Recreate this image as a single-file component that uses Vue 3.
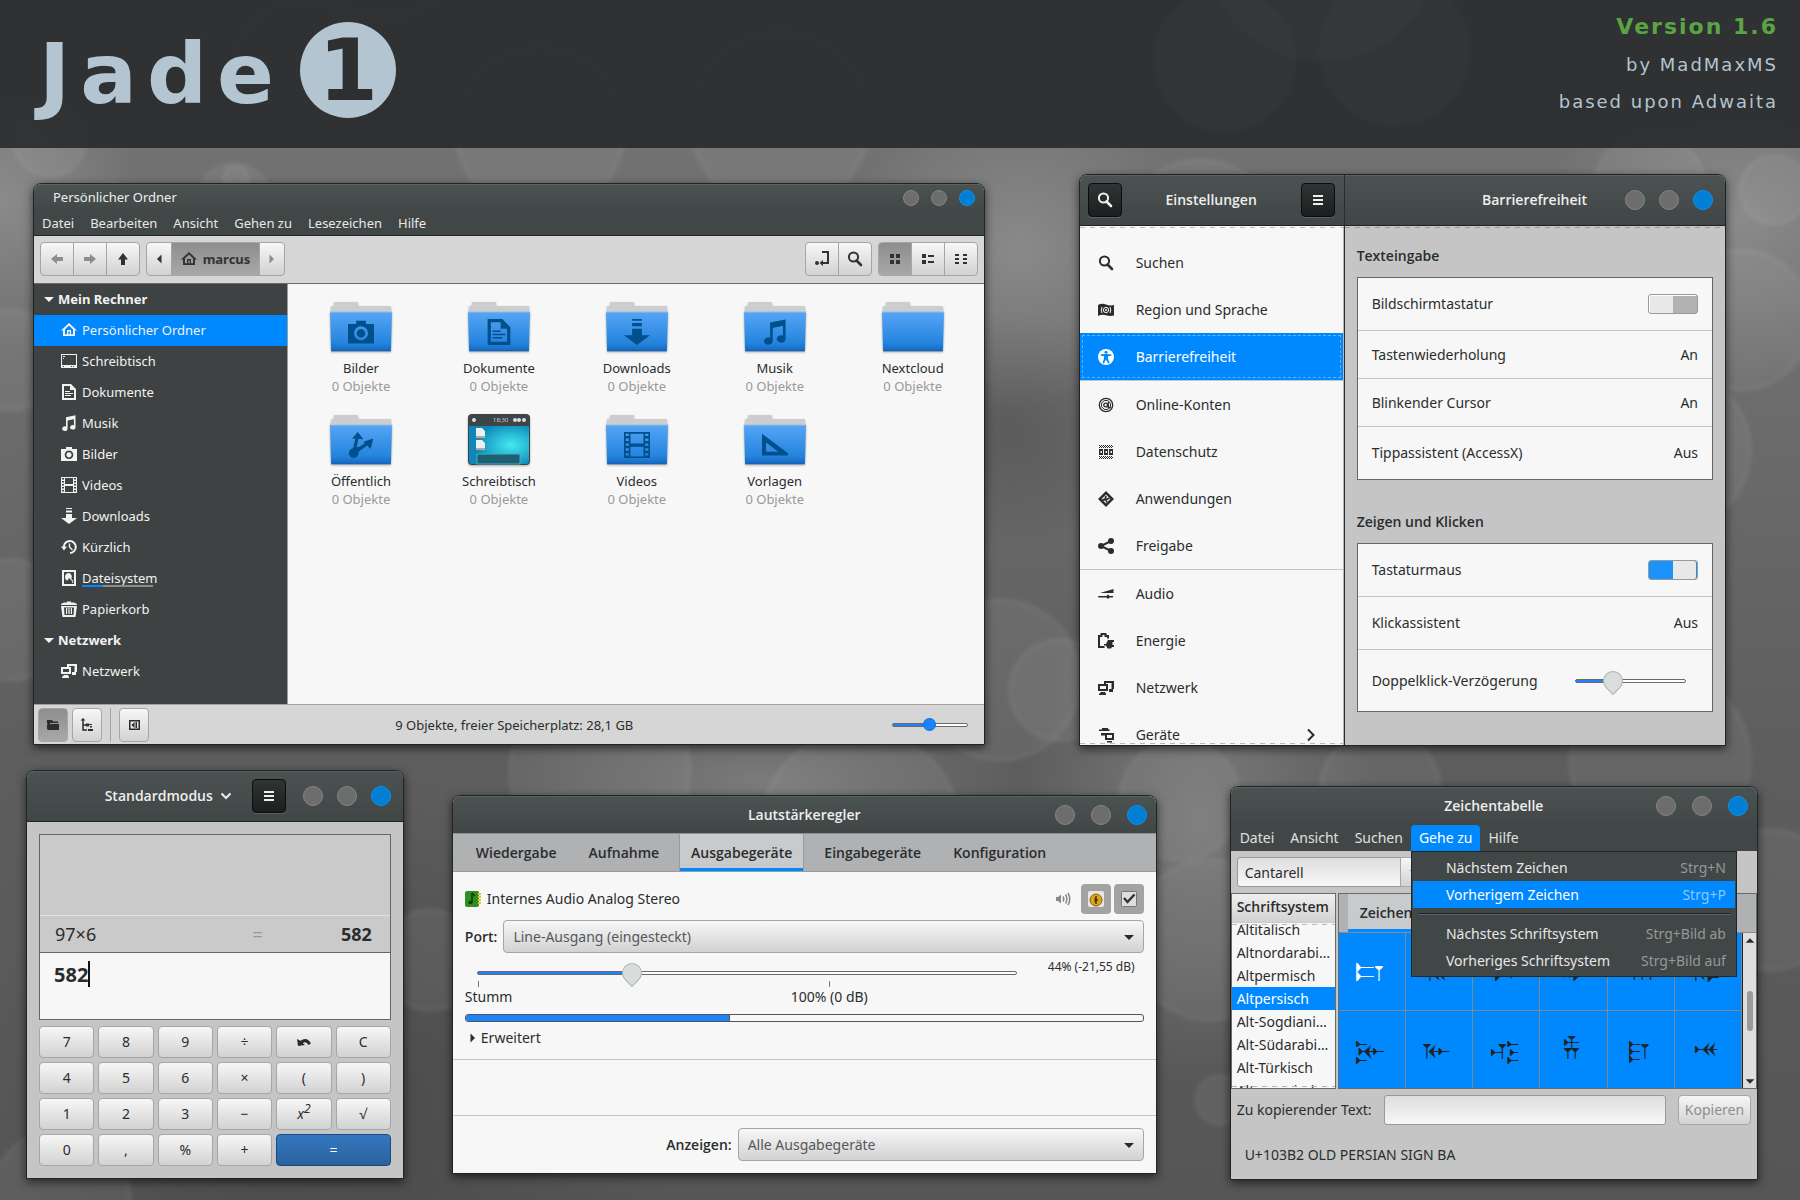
<script setup>
import { ref } from 'vue'

const controls = ['min', 'max', 'close']
const fileMenu = ['Datei', 'Bearbeiten', 'Ansicht', 'Gehen zu', 'Lesezeichen', 'Hilfe']
const places = [
  { id: 'home', label: 'Persönlicher Ordner' },
  { id: 'desktop', label: 'Schreibtisch' },
  { id: 'doc', label: 'Dokumente' },
  { id: 'music', label: 'Musik' },
  { id: 'camera', label: 'Bilder' },
  { id: 'film', label: 'Videos' },
  { id: 'download', label: 'Downloads' },
  { id: 'recent', label: 'Kürzlich' },
  { id: 'disk', label: 'Dateisystem', usage: 30 },
  { id: 'trash', label: 'Papierkorb' },
]
const folders = [
  { name: 'Bilder', glyph: 'camera' },
  { name: 'Dokumente', glyph: 'doc' },
  { name: 'Downloads', glyph: 'download' },
  { name: 'Musik', glyph: 'music' },
  { name: 'Nextcloud', glyph: '' },
  { name: 'Öffentlich', glyph: 'public' },
  { name: 'Schreibtisch', glyph: 'screen' },
  { name: 'Videos', glyph: 'film' },
  { name: 'Vorlagen', glyph: 'template' },
]
const settings = [
  { id: 'search', label: 'Suchen' },
  { id: 'flag', label: 'Region und Sprache' },
  { id: 'access', label: 'Barrierefreiheit', active: true },
  { id: 'at', label: 'Online-Konten' },
  { id: 'privacy', label: 'Datenschutz' },
  { id: 'apps', label: 'Anwendungen' },
  { id: 'share', label: 'Freigabe', line: true },
  { id: 'audio', label: 'Audio' },
  { id: 'power', label: 'Energie' },
  { id: 'network', label: 'Netzwerk' },
  { id: 'devices', label: 'Geräte', more: true },
]
const keys = ['7', '8', '9', '÷', 'undo', 'C', '4', '5', '6', '×', '(', ')', '1', '2', '3', '−', 'x2', '√', '0', ',', '%', '+', '=']
const tabs = ['Wiedergabe', 'Aufnahme', 'Ausgabegeräte', 'Eingabegeräte', 'Konfiguration']
const scripts = ['Altitalisch', 'Altnordarabi…', 'Altpermisch', 'Altpersisch', 'Alt-Sogdiani…', 'Alt-Südarabi…', 'Alt-Türkisch', 'Altungarisch']
const chars = Array.from({ length: 12 }, (_, i) => String.fromCodePoint(0x103b2 + i))

const zoom = ref(50)
const delay = ref(30)
const volume = ref(44)
const level = 39
const screenKeyboard = ref(false)
const mouseKeys = ref(true)
</script>

<template>
  <svg class="symbols" aria-hidden="true">
    <symbol id="home" viewBox="0 0 16 16"><path d="M8 1 0 8.5h2V14h12V8.5h2zM8 3.6l4 3.8v4.8H4V7.4z" fill-rule="evenodd" /><path d="M6 13V8h4v5H8.7V9.5H7.3V13z" /></symbol>
    <symbol id="desktop" viewBox="0 0 16 16"><path d="M0 1h16v14H0zm1 1v10h14V2zm11 11v1h1v-1zm-2 0v1h1v-1zM2 13v1h1v-1z" fill-rule="evenodd" /><path d="M2 3h2v1H2zM2 5h1v1H2z" /></symbol>
    <symbol id="doc" viewBox="0 0 16 16"><path d="M1 0h9l5 5v11H1zm2 2v12h10V6H9V2z" fill-rule="evenodd" /><path d="M4 7h5v1H4zM4 9h8v1H4zM4 11h6v1H4z" /></symbol>
    <symbol id="music" viewBox="0 0 16 16"><path d="M5 2.2 14.5.3V12.200a2.700 2.300 0 1 1-1.600-2V4.200L6.600 5.500v8a2.700 2.300 0 1 1-1.600-2z" /></symbol>
    <symbol id="camera" viewBox="0 0 16 16"><path d="M5 1h6v2h5v12H0V3h5zm3 3.500a4.300 4.300 0 1 0 .01 0zm0 1.700a2.600 2.600 0 1 1-.01 0z" fill-rule="evenodd" /></symbol>
    <symbol id="film" viewBox="0 0 16 16"><path d="M0 0h16v16H0zm4 1v6h8V1zm0 8v6h8V9zM1 1v1.500h2V1zm0 3v1.500h2V4zm0 3v1.500h2V7zm0 3v1.500h2V10zm0 3v1.500h2V13zM13 1v1.500h2V1zm0 3v1.500h2V4zm0 3v1.500h2V7zm0 3v1.500h2V10zm0 3v1.500h2V13z" fill-rule="evenodd" /></symbol>
    <symbol id="download" viewBox="0 0 16 16"><path d="M5 0h6v1H5zM5 2.500h6v2H5zM5 6h6v4h5l-8 6-8-6h5z" /></symbol>
    <symbol id="recent" viewBox="0 0 16 16"><path d="M2.800 8A6 6 0 1 1 9 14" fill="none" stroke="currentColor" stroke-width="2" /><path d="M0 7.500h6L3 11.500z" /><path d="M8.500 4.500V8l3 3" fill="none" stroke="currentColor" stroke-width="1.400" /></symbol>
    <symbol id="disk" viewBox="0 0 16 16"><path d="M1 0h14v16H1zm2 2v12h10V2z" fill-rule="evenodd" /><path d="M8 3a4 4 0 0 0-1.500 7.700L8 8l4 4 .5-1-2.200-2.200A4 4 0 0 0 8 3z" /><path d="M11 12h1v1h-1z" /></symbol>
    <symbol id="trash" viewBox="0 0 16 16"><path d="M3 1.500h3V.5h4v1h3l3 1.500v1H0V3zM0 5h16l-1.500 11h-13zm3 1.500L3.500 14h9l.5-7.500z" fill-rule="evenodd" /><path d="M5 7h1.200v6H5zM7.400 7h1.200v6H7.400zM9.800 7H11v6H9.800z" /></symbol>
    <symbol id="network" viewBox="0 0 16 16"><path d="M6 1h10v8h-1v3h-4V9h2.500V3H8v1H6zM0 4h10v7H0zm2 2v3h6V6zM3 12h4l1 2v1H1v-1z" fill-rule="evenodd" /></symbol>
    <symbol id="search" viewBox="0 0 16 16"><circle cx="6.500" cy="6" r="4.600" fill="none" stroke="currentColor" stroke-width="2" /><path d="M9.500 9.500 14 14" stroke="currentColor" stroke-width="2.600" stroke-linecap="round" /></symbol>
    <symbol id="flag" viewBox="0 0 16 16"><path d="M0 3q4-2 8-.5T16 3v10.500q-4 1-8-.2T0 14z" /><circle cx="8" cy="8" r="2.600" fill="none" stroke="#f7f7f7" /><circle cx="8" cy="8" r="1" fill="#f7f7f7" /><path d="M4 5q-1.500 3 0 6M12 5q1.500 3 0 6" fill="none" stroke="#f7f7f7" /></symbol>
    <symbol id="access" viewBox="0 0 16 16"><circle cx="8" cy="8" r="8" /><circle cx="8" cy="3.300" r="1.500" fill="#0088ff" /><path d="M2.500 5.500 7 5h2l4.500.5-.2 1.200-3.300.5v2.300l1.500 4.500-1.300.4L8 10.500l-2.200 3.900-1.300-.4L6 9.500V7.200l-3.300-.5z" fill="#0088ff" /></symbol>
    <symbol id="at" viewBox="0 0 16 16"><circle cx="8" cy="8" r="6.700" fill="none" stroke="currentColor" stroke-width="1.300" /><circle cx="8" cy="8" r="4.600" fill="none" stroke="currentColor" /><circle cx="7.700" cy="8" r="1.900" fill="none" stroke="currentColor" stroke-width="1.400" /><path d="M10.300 5v5.500h2.500" fill="none" stroke="currentColor" stroke-width="1.300" /></symbol>
    <symbol id="privacy" viewBox="0 0 16 16"><path d="M1 1.500h14M1 3.500h14M1 12.500h14M1 14.500h14" stroke="currentColor" stroke-dasharray="1 1" /><path d="M2 2.500h13M2 13.500h13" stroke="currentColor" stroke-dasharray="1 1" /><path d="M1 5h4v6H1zm1.500 2v2H4V7zM6 5h4v6H6zm1.500 2v2H9V7zM11 5h4v6h-4zm1.500 2v2H14V7z" fill-rule="evenodd" /></symbol>
    <symbol id="apps" viewBox="0 0 16 16"><path d="m8 0 8 8-8 8-8-8zm0 3.500L3.500 8 8 12.500 12.500 8z" fill-rule="evenodd" /><path d="m7 4.500 2 1-1.200 2 3-1L12 8l-3 1 .5 2L8 12l-.5-2.500L5 10 4 8l2.500-.5z" /></symbol>
    <symbol id="share" viewBox="0 0 16 16"><circle cx="3" cy="8" r="3" /><circle cx="13" cy="3" r="3" /><circle cx="13" cy="13" r="3" /><path d="M13 3 3 8l10 5" fill="none" stroke="currentColor" stroke-width="2" /></symbol>
    <symbol id="audio" viewBox="0 0 16 16"><path d="M2 7 15.500 3v4zM0 10h8.500l1.500-1.500L11.500 10H15v1.500h-3.500L10 13l-1.500-1.500H.5z" /></symbol>
    <symbol id="power" viewBox="0 0 16 16"><path d="M6.500 14H1V3h2.500V1h4v2H10v2.500" fill="none" stroke="currentColor" stroke-width="2" /><path d="M16 7v2h-1.500v3H16v2h-2l-1 1.500H9.500L8 12.500H6V11h2l2-4z" /></symbol>
    <symbol id="devices" viewBox="0 0 16 16"><path d="M4 1h6v1.200h1.500V4H1V2.500h3zM3 6h4v2.500H3z" /><path d="M7 6h9v7H7zm2 2v3h5V8zM9 14h5v1.500H9z" fill-rule="evenodd" /></symbol>
    <symbol id="public" viewBox="0 0 16 16"><circle cx="3.500" cy="13" r="3" /><path d="M3.500 13 5.500 4M3.500 13l9-6.500" stroke="currentColor" stroke-width="2" fill="none" /><path d="m6 0 3.500 4.500-7-.5zM15.500 4 14 10.500 9.500 6z" /><path d="m4.500 9.500 6-1-5 4z" /></symbol>
    <symbol id="template" viewBox="0 0 16 16"><path d="M0 1v13.500h18zm2.500 5.500 7.500 5.700H2.500z" fill-rule="evenodd" /></symbol>
    <symbol id="left" viewBox="0 0 16 16"><path d="M2 8l6-5v3h6v4H8v3z" /></symbol>
    <symbol id="right" viewBox="0 0 16 16"><path d="M14 8 8 3v3H2v4h6v3z" /></symbol>
    <symbol id="up" viewBox="0 0 16 16"><path d="M8 2l5 6.500h-3V14H6V8.500H3z" /></symbol>
    <symbol id="tri-left" viewBox="0 0 16 16"><path d="M10.500 3.500v9L6 8z" /></symbol>
    <symbol id="tri-right" viewBox="0 0 16 16"><path d="M5.500 3.500v9L10 8z" /></symbol>
    <symbol id="tri-down" viewBox="0 0 16 16"><path d="M3 6h10l-5 5z" /></symbol>
    <symbol id="tri-up" viewBox="0 0 16 16"><path d="M3 11h10L8 6z" /></symbol>
    <symbol id="locate" viewBox="0 0 16 16"><circle cx="3" cy="12" r="2" /><path d="M8 1h6v11H8" fill="none" stroke="currentColor" stroke-width="2" /><path d="M9 9v6l-3.500-3z" /></symbol>
    <symbol id="icons" viewBox="0 0 16 16"><path d="M3 3h4v4H3zM9 3h4v4H9zM3 9h4v4H3zM9 9h4v4H9z" /></symbol>
    <symbol id="list" viewBox="0 0 16 16"><path d="M2 3h4v4H2zM2 9h4v4H2zM8 4h6v2H8zM8 10h6v2H8z" /></symbol>
    <symbol id="compact" viewBox="0 0 16 16"><path d="M2 3h4v2H2zM2 7h4v2H2zM2 11h4v2H2zM10 3h4v2h-4zM10 7h4v2h-4zM10 11h4v2h-4z" /></symbol>
    <symbol id="folder" viewBox="0 0 16 16"><path d="M2 3h5l1 1.500h5V6H5v5H3V6H2zM5.500 7H14v6H3l-1-1V5l2 6z" /></symbol>
    <symbol id="tree" viewBox="0 0 16 16"><path d="M4 2v11h4M4 8h4" stroke="currentColor" stroke-width="1.500" fill="none" /><path d="M1.500 3.500h5L4 1zM7 6.500h3v3H7zM10 7h3v1h-3zM9 12h5v2H9zM11 9h2v1.500h-2z" /></symbol>
    <symbol id="panel" viewBox="0 0 16 16"><path d="M3 3h11v10H3zm1.500 1.500v7h8v-7z" fill-rule="evenodd" /><path d="M8.500 5v6L5.500 8zM9.500 5H11v6H9.500z" /></symbol>
    <symbol id="menu" viewBox="0 0 16 16"><path d="M3 3h10v2H3zM3 7h10v2H3zM3 11h10v2H3z" /></symbol>
    <symbol id="undo" viewBox="0 0 16 16"><path d="M1 5l1 7 7-1-2.200-1.800Q10 6.500 12.500 11L15 9.500Q11 2 4.500 6.800z" /></symbol>
    <symbol id="chev-down" viewBox="0 0 16 16"><path d="m3.500 5.500 4.500 4.500 4.500-4.500" fill="none" stroke="currentColor" stroke-width="2" /></symbol>
    <symbol id="chev-right" viewBox="0 0 16 16"><path d="m5 2.500 5.500 5.500L5 13.500" fill="none" stroke="currentColor" stroke-width="2" /></symbol>
    <symbol id="speaker" viewBox="0 0 16 16"><path d="M1 6h2l3-2.500v9L3 10H1z" /><path d="M8 5.500q1.500 2.500 0 5M10.500 3.500q2.800 4.500 0 9M13 2q3.500 6 0 12" fill="none" stroke="currentColor" stroke-width="1.500" /></symbol>
    <linearGradient id="g-front" x1="0" y1="0" x2="0" y2="1">
      <stop offset="0" stop-color="#57a5f4" /><stop offset=".8" stop-color="#2484de" /><stop offset="1" stop-color="#1668be" />
    </linearGradient>
    <radialGradient id="g-screen" cx=".7" cy=".5" r=".6">
      <stop offset="0" stop-color="#42eaf0" /><stop offset="1" stop-color="#0f86b8" />
    </radialGradient>
    <radialGradient id="g-glow"><stop offset="0" stop-color="#fff" stop-opacity=".18" /><stop offset="1" stop-color="#fff" stop-opacity="0" /></radialGradient>
    <radialGradient id="g-dark"><stop offset="0" stop-color="#000" stop-opacity=".15" /><stop offset="1" stop-color="#000" stop-opacity="0" /></radialGradient>
    <linearGradient id="g-desk" x1="0" y1="0" x2="0" y2="1">
      <stop offset="0" stop-color="#747474" /><stop offset=".3" stop-color="#6e6e6e" /><stop offset=".62" stop-color="#5e5e5e" /><stop offset="1" stop-color="#565656" />
    </linearGradient>
    <filter id="soft"><feGaussianBlur stdDeviation="2" /></filter>
  </svg>

  <div class="page">
    <svg class="wallpaper" viewBox="0 0 1800 1200" preserveAspectRatio="xMidYMid slice" aria-hidden="true">
      <rect width="1800" height="1200" fill="url(#g-desk)" />
      <ellipse cx="1020" cy="250" rx="180" ry="160" fill="url(#g-glow)" />
      <ellipse cx="1740" cy="220" rx="200" ry="160" fill="url(#g-glow)" />
      <ellipse cx="0" cy="200" rx="140" ry="160" fill="url(#g-glow)" />
      <ellipse cx="1010" cy="430" rx="140" ry="120" fill="url(#g-dark)" />
      <ellipse cx="1200" cy="820" rx="180" ry="260" fill="url(#g-glow)" />
      <ellipse cx="760" cy="780" rx="260" ry="80" fill="url(#g-glow)" />
      <ellipse cx="330" cy="1100" rx="360" ry="340" fill="url(#g-dark)" />
      <g fill="#fff" fill-opacity=".05" stroke="#fff" stroke-opacity=".07" stroke-width="3" filter="url(#soft)">
        <circle cx="540" cy="130" r="84" /><circle cx="385" cy="-60" r="80" /><circle cx="300" cy="70" r="70" />
        <circle cx="780" cy="120" r="90" /><circle cx="1200" cy="240" r="80" /><circle cx="1650" cy="190" r="56" />
        <circle cx="1774" cy="190" r="34" /><circle cx="1670" cy="450" r="80" /><circle cx="1740" cy="320" r="70" />
        <circle cx="10" cy="360" r="50" /><circle cx="50" cy="140" r="36" /><circle cx="236" cy="178" r="12" />
        <circle cx="112" cy="194" r="10" /><circle cx="234" cy="200" r="36" /><circle cx="10" cy="620" r="60" />
        <circle cx="1000" cy="680" r="80" /><circle cx="1060" cy="690" r="50" /><circle cx="1180" cy="800" r="60" />
        <circle cx="1210" cy="940" r="80" /><circle cx="600" cy="770" r="90" /><circle cx="860" cy="830" r="100" />
        <circle cx="1220" cy="1100" r="24" /><circle cx="430" cy="960" r="50" /><circle cx="1380" cy="790" r="60" />
        <circle cx="1660" cy="760" r="90" /><circle cx="1770" cy="900" r="70" /><circle cx="60" cy="1200" r="70" />
      </g>
      <g fill="#fff" fill-opacity=".22" stroke="#fff" stroke-opacity=".2" stroke-width="3" filter="url(#soft)">
        <circle cx="1322" cy="-55" r="115" /><circle cx="1395" cy="50" r="74" /><circle cx="1225" cy="60" r="70" />
      </g>
    </svg>

    <header class="banner">
      <h1 class="logo">Jade<span class="logo-one">1</span></h1>
      <div class="credits">
        <p class="version">Version 1.6</p>
        <p>by MadMaxMS</p>
        <p>based upon Adwaita</p>
      </div>
    </header>

    <main class="desk">
      <div class="row row-top">
        <section class="win files">
          <div class="bar files-title">
            <span>Persönlicher Ordner</span>
            <div class="controls small"><button v-for="c in controls" :key="c" :class="c" :aria-label="c"></button></div>
          </div>
          <nav class="files-menu"><button v-for="m in fileMenu" :key="m">{{ m }}</button></nav>
          <div class="files-tools">
            <div class="group">
              <button disabled aria-label="Zurück"><svg class="ic"><use href="#left" /></svg></button>
              <button disabled aria-label="Vor"><svg class="ic"><use href="#right" /></svg></button>
              <button aria-label="Aufwärts"><svg class="ic"><use href="#up" /></svg></button>
            </div>
            <div class="group path">
              <button class="narrow" aria-label="Nach links"><svg class="ic"><use href="#tri-left" /></svg></button>
              <button class="on crumb"><svg class="ic"><use href="#home" /></svg>marcus</button>
              <button class="narrow" disabled aria-label="Nach rechts"><svg class="ic"><use href="#tri-right" /></svg></button>
            </div>
            <div class="group push">
              <button aria-label="Ort"><svg class="ic"><use href="#locate" /></svg></button>
              <button aria-label="Suche"><svg class="ic"><use href="#search" /></svg></button>
            </div>
            <div class="group">
              <button class="on" aria-label="Symbole"><svg class="ic"><use href="#icons" /></svg></button>
              <button aria-label="Liste"><svg class="ic"><use href="#list" /></svg></button>
              <button aria-label="Kompakt"><svg class="ic"><use href="#compact" /></svg></button>
            </div>
          </div>
          <div class="files-body">
            <aside class="side">
              <h2><svg class="ic"><use href="#tri-down" /></svg>Mein Rechner</h2>
              <a v-for="(p, i) in places" :key="p.id" href="#" :class="{ current: i === 0 }">
                <svg class="ic"><use :href="'#' + p.id" /></svg>
                <span class="place">{{ p.label }}<span v-if="p.usage" class="usage"><span :style="{ width: p.usage + '%' }"></span></span></span>
              </a>
              <h2><svg class="ic"><use href="#tri-down" /></svg>Netzwerk</h2>
              <a href="#"><svg class="ic"><use href="#network" /></svg><span>Netzwerk</span></a>
            </aside>
            <div class="folders">
              <div v-for="f in folders" :key="f.name" class="folder">
                <svg v-if="f.glyph !== 'screen'" class="folder-pic" viewBox="0 0 62 50">
                  <path d="M1 12V5q0-1 1-1h2V1q0-1 1-1h22q1 0 1 1v3h32q1 0 1 1v7z" fill="#cdcdcd" />
                  <path d="M0 10h62l-1 38q0 1-1 1H2q-1 0-1-1z" fill="url(#g-front)" />
                  <path d="M0 10h62" stroke="#8cc0f5" /><path d="M1 49h60" stroke="#0f55a0" stroke-opacity=".6" />
                  <svg v-if="f.glyph" x="18" y="17" width="26" height="26" class="folder-glyph" overflow="visible"><use :href="'#' + f.glyph" /></svg>
                </svg>
                <svg v-else class="folder-pic" viewBox="0 0 62 50">
                  <rect x="0" y="-1" width="62" height="51" rx="4" fill="#3c4648" />
                  <path d="M1 11h60v35q0 3-3 3H4q-3 0-3-3z" fill="url(#g-screen)" />
                  <circle cx="6" cy="5" r="2" fill="#ddd" /><circle cx="47" cy="5" r="2" fill="#ddd" /><circle cx="51" cy="5" r="2" fill="#ddd" /><circle cx="56" cy="5" r="2" fill="#ddd" />
                  <text x="25" y="7" font-size="6" fill="#ccc">18:30</text>
                  <path d="M8 13h6l3 3v6H8zM8 25h6l3 3v6H8z" fill="#eee" /><path d="M8 21h9v2H8zM8 33h9v2H8z" fill="#aaa" />
                  <rect x="9" y="39" width="43" height="10" fill="#1e5f72" stroke="#3fb6c8" />
                </svg>
                <span class="folder-name">{{ f.name }}</span>
                <span class="folder-count">0 Objekte</span>
              </div>
            </div>
          </div>
          <footer class="files-status">
            <button class="btn on" aria-label="Orte"><svg class="ic"><use href="#folder" /></svg></button>
            <button class="btn" aria-label="Baum"><svg class="ic"><use href="#tree" /></svg></button>
            <span class="vline"></span>
            <button class="btn" aria-label="Seitenleiste"><svg class="ic"><use href="#panel" /></svg></button>
            <span class="status-text">9 Objekte, freier Speicherplatz: 28,1 GB</span>
            <input v-model="zoom" class="range round" type="range" aria-label="Vergrößerung" :style="{ '--v': zoom + '%' }" />
          </footer>
        </section>

        <section class="win settings">
          <div class="set-left">
            <div class="bar set-head">
              <button class="dark" aria-label="Suchen"><svg class="ic"><use href="#search" /></svg></button>
              <strong>Einstellungen</strong>
              <button class="dark" aria-label="Menü"><svg class="ic"><use href="#menu" /></svg></button>
            </div>
            <nav class="set-list">
              <a v-for="s in settings" :key="s.id" href="#" :class="{ active: s.active, line: s.line }">
                <svg class="ic"><use :href="'#' + s.id" /></svg><span>{{ s.label }}</span>
                <svg v-if="s.more" class="ic more"><use href="#chev-right" /></svg>
              </a>
            </nav>
          </div>
          <div class="set-right">
            <div class="bar set-head right">
              <strong>Barrierefreiheit</strong>
              <div class="controls"><button v-for="c in controls" :key="c" :class="c" :aria-label="c"></button></div>
            </div>
            <div class="set-page">
              <h2>Texteingabe</h2>
              <div class="card">
                <label class="card-row tall"><span>Bildschirmtastatur</span><input v-model="screenKeyboard" type="checkbox" class="switch" /></label>
                <div class="card-row"><span>Tastenwiederholung</span><span>An</span></div>
                <div class="card-row"><span>Blinkender Cursor</span><span>An</span></div>
                <div class="card-row tall"><span>Tippassistent (AccessX)</span><span>Aus</span></div>
              </div>
              <h2>Zeigen und Klicken</h2>
              <div class="card">
                <label class="card-row tall"><span>Tastaturmaus</span><input v-model="mouseKeys" type="checkbox" class="switch" /></label>
                <div class="card-row tall"><span>Klickassistent</span><span>Aus</span></div>
                <label class="card-row slider"><span>Doppelklick-Verzögerung</span><input v-model="delay" class="range" type="range" :style="{ '--v': delay + '%' }" /></label>
              </div>
            </div>
          </div>
        </section>
      </div>

      <div class="row row-bottom">
        <section class="win calc">
          <div class="bar calc-head">
            <button class="mode">Standardmodus<svg class="ic"><use href="#chev-down" /></svg></button>
            <button class="dark" aria-label="Menü"><svg class="ic"><use href="#menu" /></svg></button>
            <div class="controls"><button v-for="c in controls" :key="c" :class="c" :aria-label="c"></button></div>
          </div>
          <div class="calc-body">
            <div class="display">
              <div class="history"><div class="calc-line"><span>97×6</span><span class="eq">=</span><b>582</b></div></div>
              <div class="entry"><b>582</b><span class="caret"></span></div>
            </div>
            <div class="keys">
              <button v-for="k in keys" :key="k" class="btn key" :class="{ equals: k === '=' }" :aria-label="k">
                <svg v-if="k === 'undo'" class="ic"><use href="#undo" /></svg>
                <i v-else-if="k === 'x2'">x<sup>2</sup></i>
                <template v-else>{{ k }}</template>
              </button>
            </div>
          </div>
        </section>

        <section class="win mixer">
          <div class="bar mixer-head">
            <strong>Lautstärkeregler</strong>
            <div class="controls wide"><button v-for="c in controls" :key="c" :class="c" :aria-label="c"></button></div>
          </div>
          <nav class="tabs"><button v-for="(t, i) in tabs" :key="t" :class="{ active: i === 2 }">{{ t }}</button></nav>
          <div class="device">
            <div class="device-head">
              <svg class="ic card-icon" viewBox="0 0 16 16"><rect x="0" y="0" width="14" height="16" rx="2" fill="#2f8f1f" /><path d="M13 2h3v2h-3zM13 5h3v2h-3zM13 8h3v2h-3zM13 11h3v2h-3z" fill="#e0c530" /><path d="M7 2v9M7 2l3 3" stroke="#123c0c" stroke-width="1.500" fill="none" /><ellipse cx="5.500" cy="11.500" rx="2.200" ry="1.800" fill="#123c0c" /></svg>
              <span>Internes Audio Analog Stereo</span>
              <svg class="ic mute"><use href="#speaker" /></svg>
              <button class="sq" aria-label="Kanäle sperren"><svg class="ic" viewBox="0 0 16 16"><rect width="16" height="16" rx="2" fill="#e6e6e2" /><circle cx="8" cy="9" r="6" fill="#dba51c" stroke="#8a6508" /><path d="M8 5v8M6.500 7.500 9 9l-2.500 1.500" stroke="#4a3500" stroke-width="1.500" fill="none" /></svg></button>
              <button class="sq" aria-label="Als Ausweichoption setzen"><svg class="ic" viewBox="0 0 16 16"><rect x=".5" y=".5" width="15" height="15" rx="1" fill="#dedede" stroke="#777" /><path d="m3 7 3.500 4L13.500 3.500" stroke="#333" stroke-width="2.500" fill="none" /></svg></button>
            </div>
            <div class="port">
              <label for="port">Port:</label>
              <div class="combo"><select id="port"><option>Line-Ausgang (eingesteckt)</option></select><svg class="ic"><use href="#tri-down" /></svg></div>
            </div>
            <div class="volume">
              <div class="volume-scale">
                <input v-model="volume" class="range" type="range" min="0" max="158" aria-label="Lautstärke" :style="{ '--v': (volume / 158) * 100 + '%' }" />
                <div class="marks"><span>Stumm</span><span class="full">100% (0 dB)</span></div>
              </div>
              <span class="db">44% (-21,55 dB)</span>
            </div>
            <div class="meter"><span :style="{ width: level + '%' }"></span></div>
            <button class="expand"><svg class="ic"><use href="#tri-right" /></svg>Erweitert</button>
          </div>
          <div class="blank"></div>
          <div class="show">
            <label for="show">Anzeigen:</label>
            <div class="combo"><select id="show"><option>Alle Ausgabegeräte</option></select><svg class="ic"><use href="#tri-down" /></svg></div>
          </div>
        </section>

        <section class="win charmap">
          <div class="bar char-head">
            <strong>Zeichentabelle</strong>
            <div class="controls wider"><button v-for="c in controls" :key="c" :class="c" :aria-label="c"></button></div>
          </div>
          <nav class="char-menu">
            <button>Datei</button><button>Ansicht</button><button>Suchen</button>
            <div class="open">
              <button class="active">Gehe zu</button>
              <div class="menu" role="menu">
                <button role="menuitem"><span>Nächstem Zeichen</span><kbd>Strg+N</kbd></button>
                <button role="menuitem" class="active"><span>Vorherigem Zeichen</span><kbd>Strg+P</kbd></button>
                <hr />
                <button role="menuitem"><span>Nächstes Schriftsystem</span><kbd>Strg+Bild ab</kbd></button>
                <button role="menuitem"><span>Vorheriges Schriftsystem</span><kbd>Strg+Bild auf</kbd></button>
              </div>
            </div>
            <button>Hilfe</button>
          </nav>
          <div class="char-tools"><input class="field font" value="Cantarell" aria-label="Schrift" /><button class="btn drop" aria-label="Schrift wählen"><svg class="ic"><use href="#tri-down" /></svg></button></div>
          <div class="char-panes">
            <div class="scripts">
              <div class="scripts-head">Schriftsystem</div>
              <ul><li v-for="(s, i) in scripts" :key="s" :class="{ active: i === 3 }">{{ s }}</li></ul>
            </div>
            <div class="book">
              <div class="book-tabs"><button>Zeichentabelle</button></div>
              <div class="book-page">
                <div class="glyphs"><span v-for="(c, i) in chars" :key="i" :class="{ sel: i === 0 }">{{ c }}</span></div>
                <div class="scroll"><svg class="ic"><use href="#tri-up" /></svg><span class="thumb"></span><svg class="ic"><use href="#tri-down" /></svg></div>
              </div>
            </div>
          </div>
          <div class="copy">
            <label for="copy">Zu kopierender Text:</label><input id="copy" class="field" /><button class="btn" disabled>Kopieren</button>
          </div>
          <div class="char-status">U+103B2 OLD PERSIAN SIGN BA</div>
        </section>
      </div>
    </main>
  </div>
</template>

<style>
body {
  margin: 0;
  background: #5a5a5a;
}
</style>

<style scoped>
* { box-sizing: border-box; }
button, input, select { font: inherit; color: inherit; margin: 0; }
button { padding: 0; border: 0; background: none; }
a { color: inherit; text-decoration: none; }
h1, h2, p, ul, hr { margin: 0; padding: 0; }
ul { list-style: none; }
kbd { font: inherit; }

.symbols { position: absolute; width: 0; height: 0; }
.ic { width: 16px; height: 16px; flex: none; fill: currentColor; display: block; }

.page {
  position: relative;
  min-height: 100vh;
  overflow: hidden;
  font: 14px/20px "Noto Sans", "Open Sans", sans-serif;
  color: #2a2d2d;
}
.wallpaper { position: absolute; inset: 0; width: 100%; height: 100%; }

.banner {
  position: relative;
  display: flex;
  justify-content: space-between;
  height: 148px;
  padding: 0 22px 0 39px;
  background: rgba(38, 41, 42, .89);
  color: #b2c5d0;
  font-family: "DejaVu Sans", sans-serif;
}
.logo { display: flex; align-items: flex-start; gap: 16px; padding-top: 26px; font-size: 84px; line-height: 96px; letter-spacing: 10px; }
.logo-one {
  width: 96px;
  height: 96px;
  margin-top: -4px;
  border-radius: 50%;
  background: #b2c5d0;
  color: #2e2f30;
  font-size: 86px;
  text-align: center;
  letter-spacing: 0;
}
.credits { padding-top: 8px; font-size: 18px; line-height: 37px; letter-spacing: 2px; text-align: right; }
.version { padding-bottom: 1px; font-size: 22px; font-weight: bold; color: #5ba445; }

.desk { position: relative; padding-top: 26px; }
.row { display: flex; align-items: flex-start; }
.row-top { gap: 94px; padding: 0 74px 24px 33px; }
.row-bottom { padding: 0 42px 16px 26px; }

.win { border: 1px solid #1f2424; border-radius: 8px 8px 0 0; background: #c5c5c5; box-shadow: 0 3px 10px rgba(0, 0, 0, .6); min-width: 0; }
.bar { background: linear-gradient(#4b5352, #404645); color: #eee; border-radius: 7px 7px 0 0; box-shadow: inset 0 1px #586160; }
.controls { display: flex; gap: 14px; }
.controls button { width: 20px; height: 20px; border-radius: 50%; background: #6d6d6d; border: 1px solid #868686; }
.controls .close { background: #007fd4; border-color: #0a93ee; }
.controls.small { gap: 12px; }
.controls.small button { width: 16px; height: 16px; }
.controls.wide, .controls.wider { gap: 16px; }

.bar strong, .mode, .tabs button, .set-page h2, .port label, .show label, .scripts-head, .book-tabs button {
  font-family: "Open Sans", "Noto Sans", sans-serif;
  font-weight: 600;
}

.btn, .group button {
  display: flex;
  align-items: center;
  justify-content: center;
  border: 1px solid #a6a6a6;
  border-radius: 4px;
  background: linear-gradient(#f7f7f7, #d2d2d2);
}
.btn.on, .group .on { background: linear-gradient(#8e8e8e, #a8a8a8); }
.btn:disabled, .group button:disabled { color: #8b8e8f; }
.dark {
  display: flex;
  align-items: center;
  justify-content: center;
  width: 34px;
  height: 34px;
  border: 1px solid #0c0e0e;
  border-radius: 4px;
  background: linear-gradient(#2f3534, #1b1f1f);
  box-shadow: 0 1px #5a6261;
}

/* file manager */
.files { flex: 952 1 0; margin-top: 9px; font-size: 13px; line-height: 18px; background: #d6d6d6; }
.files-title { display: flex; align-items: center; justify-content: space-between; height: 28px; padding: 0 9px 0 19px; background: linear-gradient(#4b5352, #414746); }
.files-title > span { padding-bottom: 2px; }
.files-menu { display: flex; height: 24px; padding-bottom: 2px; background: #414746; color: #e8e8e8; border-bottom: 1px solid #1f2424; }
.files-menu button { padding: 0 8px; }
.files-tools { display: flex; gap: 6px; padding: 6px 6px 7px; border-bottom: 1px solid #6b6b6b; }
.group { display: flex; }
.group button { width: 34px; height: 34px; border-radius: 0; margin-left: -1px; color: #2e3436; }
.group button:first-child { margin-left: 0; border-radius: 4px 0 0 4px; }
.group button:last-child { border-radius: 0 4px 4px 0; }
.group .narrow { width: 26px; }
.group .crumb { width: 89px; gap: 6px; font-weight: bold; }
.push { margin-left: auto; }
.files-body { display: flex; }
.side { width: 253px; flex: none; padding-bottom: 17px; background: #3e4242; color: #f2f2f2; }
.side h2 { display: flex; align-items: center; gap: 1px; height: 31px; padding: 0 0 2px 7px; font-size: 13px; line-height: 18px; }
.side a { display: flex; align-items: center; gap: 5px; height: 31px; padding: 0 0 2px 27px; }
.side .current { background: #0088ff; }
.place { position: relative; }
.usage { position: absolute; left: 0; right: 4px; bottom: 0; height: 2px; background: #8a8c8d; }
.usage span { display: block; height: 2px; background: #0088ff; }
.folders { flex: 1; display: grid; grid-template-columns: repeat(5, 1fr); grid-auto-rows: 113px; padding: 18px 2px 0 4px; border-left: 1px solid #9c9c9c; background: #f7f7f7; }
.folder { display: flex; flex-direction: column; align-items: center; }
.folder-pic { width: 62px; height: 50px; margin-bottom: 7px; overflow: visible; filter: drop-shadow(0 1px 1px rgba(0, 0, 0, .3)); }
.folder-glyph { fill: #00508c; color: #00508c; }
.folder-count { color: #999; }
.files-status { display: flex; align-items: center; gap: 4px; height: 40px; padding: 0 16px 0 4px; border-top: 1px solid #a0a0a0; }
.files-status .btn { width: 30px; height: 34px; }
.vline { width: 1px; height: 34px; margin: 0 4px; background: #a6a6a6; }
.status-text { flex: 1; text-align: center; padding-right: 12px; }

.range { appearance: none; display: block; height: 24px; background: none; }
.range::-webkit-slider-runnable-track {
  height: 4px;
  border: 1px solid #6a6a6a;
  border-radius: 2px;
  background: linear-gradient(90deg, #1b83fb var(--v), #fff var(--v));
}
.range::-webkit-slider-thumb {
  appearance: none;
  width: 20px;
  height: 20px;
  margin-top: -9px;
  border: 1px solid #b0b4b4;
  border-radius: 50% 50% 0 50%;
  background: #d9dedd;
  transform: rotate(45deg);
}
.round { width: 76px; }
.round::-webkit-slider-thumb { width: 13px; height: 13px; margin-top: -6px; border-radius: 50%; border-color: #1073d8; background: #1b83fb; }

/* settings */
.settings { flex: 647 1 0; display: flex; }
.set-left { width: 265px; flex: none; border-right: 1px solid #2a2d2d; }
.set-right { flex: 1; display: flex; flex-direction: column; }
.set-head { display: flex; align-items: center; justify-content: space-between; height: 51px; padding: 0 9px 0 8px; border-bottom: 1px solid #1f2424; border-radius: 7px 0 0 0; }
.set-head.right { border-radius: 0 7px 0 0; padding-right: 12px; justify-content: flex-end; gap: 38px; }
.set-list { height: 519px; overflow: hidden; padding-top: 13px; background: #f7f7f7; border-right: 1px solid #b5b5b5; position: relative; }
.set-list::before, .set-list::after, .scripts ul::before, .scripts ul::after, .set-page::before {
  content: "";
  position: absolute;
  left: 0;
  right: 0;
  top: 1px;
  height: 1px;
  background: repeating-linear-gradient(90deg, #b8b8b8 0 5px, transparent 5px 10px);
}
.set-list::after, .scripts ul::after { top: auto; bottom: 1px; }
.set-list a { display: flex; align-items: center; gap: 22px; height: 47px; padding-left: 18px; }
.set-list .active { background: #0088ff; color: #fff; outline: 1px dashed #5ab2ff; outline-offset: -3px; box-shadow: 0 1px #c5c5c5; margin-bottom: 1px; }
.set-list .line { height: 48px; border-bottom: 1px solid #c5c5c5; }
.more { margin-left: auto; margin-right: 24px; }
.set-page { position: relative; flex: 1; padding: 20px 12px 30px; }
.set-page::before { background: repeating-linear-gradient(90deg, #999 0 5px, transparent 5px 10px); }
.set-page h2 { font-size: 14px; line-height: 20px; margin-bottom: 11px; }
.card + h2 { margin-top: 32px; }
.card { border: 1px solid #666; background: #f7f7f7; }
.card-row { display: flex; align-items: center; justify-content: space-between; height: 48px; padding: 0 14px; border-bottom: 1px solid #c5c5c5; }
.card-row.tall { height: 53px; }
.card-row:last-child { height: 52px; border-bottom: 0; }
.card-row.slider { height: 61px; }
.slider .range { width: 111px; margin-right: 12px; }
.switch { appearance: none; width: 50px; height: 20px; border: 1px solid #999; border-radius: 3px; background: linear-gradient(90deg, #e8e8e8 50%, #b2b2b2 50%); box-shadow: inset 1px 1px #fff; }
.switch:checked { background: linear-gradient(90deg, #1b93fb 50%, #e8e8e8 50%); box-shadow: inset -1px 0 #1b93fb; }

/* calculator */
.calc { flex: 377 1 0; }
.calc-head { display: flex; align-items: center; justify-content: flex-end; height: 51px; padding-right: 12px; border-bottom: 1px solid #1f2424; }
.calc-head .controls { margin-left: 17px; }
.mode { display: flex; align-items: center; gap: 5px; margin-right: 18px; }
.calc-body { padding: 12px; }
.display { border: 1px solid #666; background: #cacaca; font-size: 18px; line-height: 24px; }
.history { padding-top: 80px; border-bottom: 1px solid #666; }
.calc-line { display: flex; align-items: center; height: 37px; padding: 0 18px 0 15px; border-top: 1px solid #e0e0e0; }
.eq { flex: 1; text-align: right; color: #999; }
.calc-line b { width: 109px; text-align: right; }
.entry { display: flex; height: 66px; padding: 8px 14px; background: #f7f7f7; font-size: 20px; line-height: 28px; }
.caret { width: 2px; height: 26px; background: #111; }
.keys { display: grid; grid-template-columns: repeat(6, 1fr); gap: 4px; margin-top: 6px; }
.key { height: 32px; }
.key sup { font-size: 12px; line-height: 1px; }
.equals { grid-column: span 2; border-color: #174a80; background: linear-gradient(#3478c0, #2a629c); color: #fff; }

/* volume control */
.mixer { flex: 705 1 0; margin: 25px 0 0 48px; background: #f7f7f7; }
.mixer-head { position: relative; display: flex; align-items: center; justify-content: center; height: 38px; border-bottom: 1px solid #8d8f90; }
.mixer-head .controls { position: absolute; right: 9px; }
.tabs { display: flex; gap: 8px; height: 38px; padding-left: 11px; background: #b0b1b3; border-bottom: 1px solid #9a9b9d; }
.tabs button { padding: 0 12px; }
.tabs .active { background: #c9cacc; border: solid #9a9b9d; border-width: 0 1px; padding: 0 11px; box-shadow: inset 0 -3px #0088ff; }
.device { padding: 12px 12px 11px; border-bottom: 1px solid #c5c5c5; }
.device-head { display: flex; align-items: center; gap: 6px; height: 30px; }
.mute { margin-left: auto; margin-right: 4px; color: #888; }
.sq { display: flex; align-items: center; justify-content: center; width: 30px; height: 30px; border-radius: 4px; background: #a3a3a3; }
.sq + .sq { margin-left: -3px; }
.port, .show { display: flex; align-items: center; gap: 6px; }
.port { margin-top: 6px; }
.combo { position: relative; flex: 1; }
.combo select { appearance: none; display: block; width: 100%; height: 33px; padding: 0 9px; border: 1px solid #a6a6a6; border-radius: 4px; background: linear-gradient(#f7f7f7, #d2d2d2); color: #55585a; }
.combo .ic { position: absolute; right: 7px; top: 9px; pointer-events: none; }
.volume { display: flex; align-items: flex-start; justify-content: space-between; padding: 4px 9px 0 0; }
.volume-scale { flex: 1; max-width: 552px; margin-top: 4px; }
.volume-scale .range { width: calc(100% - 12px); margin-left: 12px; }
.marks { display: flex; justify-content: space-between; margin-top: 2px; }
.marks span { position: relative; }
.marks span::before { content: ""; position: absolute; left: 13px; top: -6px; width: 1px; height: 6px; background: #777; }
.marks .full::before { left: 50%; }
.full { margin-right: 149px; }
.db { font-size: 12px; }
.meter { height: 8px; margin-top: 7px; border: 1px solid #555; border-radius: 3px; background: #f7f7f7; overflow: hidden; }
.meter span { display: block; height: 100%; border-right: 1px solid #555; background: #1b83fb; }
.expand { display: flex; align-items: center; margin-top: 6px; }
.blank { height: 55px; }
.show { border-top: 1px solid #c5c5c5; padding: 12px; justify-content: flex-end; }
.show .combo { flex: 0 1 406px; }

/* character map */
.charmap { flex: 528 1 0; margin: 16px 0 0 73px; }
.char-head { position: relative; display: flex; align-items: center; justify-content: center; height: 38px; background: linear-gradient(#4b5352, #414746); }
.char-head .controls { position: absolute; right: 9px; }
.char-menu { display: flex; height: 26px; padding-left: 1px; background: #414746; color: #e0e0e0; }
.char-menu > button, .open > button { height: 26px; padding: 0 8px; }
.open { position: relative; }
.open > .active { background: #0088ff; color: #fff; border-radius: 4px 4px 0 0; }
.menu { position: absolute; z-index: 2; left: 0; top: 26px; width: 326px; padding: 2px 1px; border: 1px solid #1f2424; background: #414746; color: #e8e8e8; }
.menu button { display: flex; justify-content: space-between; align-items: center; width: 100%; height: 27px; padding: 0 9px 0 33px; }
.menu kbd { color: #959999; }
.menu .active { background: #0088ff; color: #fff; }
.menu .active kbd { color: #8cc8ff; }
.menu hr { height: 2px; margin: 5px; border: 0; border-top: 1px solid #1f2424; border-bottom: 1px solid #5e6564; }
.char-tools { display: flex; padding: 6px; }
.field { height: 30px; padding: 0 7px; border: 1px solid #999; border-radius: 3px; background: linear-gradient(#dedede, #f7f7f7); min-width: 0; }
.font { width: 164px; border-radius: 3px 0 0 3px; }
.drop { width: 30px; margin-left: -1px; border-radius: 0 4px 4px 0; }
.char-panes { display: flex; gap: 2px; height: 196px; }
.scripts { width: 105px; flex: none; display: flex; flex-direction: column; border: 1px solid #6b6b6b; background: #f7f7f7; overflow: hidden; }
.scripts-head { height: 29px; padding: 3px 0 0 5px; background: linear-gradient(#efefef, #d2d2d2); border-bottom: 1px solid #ccc; }
.scripts ul { position: relative; flex: 1; overflow: hidden; }
.scripts li { height: 23px; padding-left: 5px; white-space: nowrap; line-height: 23px; }
.scripts li:first-child { margin-top: -5px; }
.scripts .active { background: #0088ff; color: #fff; }
.book { flex: 1; min-width: 0; display: flex; flex-direction: column; border: 1px solid #6b6b6b; }
.book-tabs { height: 39px; padding-left: 9px; background: #b0b1b3; border-bottom: 1px solid #8a8b8d; }
.book-tabs button { height: 38px; padding: 0 12px; background: #c9cacc; box-shadow: inset 0 -3px #0088ff; }
.book-page { flex: 1; display: flex; min-height: 0; }
.glyphs { flex: 1; display: grid; grid-template-columns: repeat(6, 1fr); grid-template-rows: 1fr 1fr; gap: 1px; padding-right: 1px; background: #808890; }
.glyphs span { display: flex; align-items: center; justify-content: center; min-height: 0; padding: 0 4px 4px 0; background: #0088ff; font-size: 28px; color: #222; }
.glyphs .sel { color: #fff; }
.scroll { width: 14px; display: flex; flex-direction: column; align-items: center; justify-content: space-between; border-left: 1px solid #222; background: #dedede; }
.thumb { width: 6px; height: 40px; border-radius: 3px; background: #9a9a9a; }
.scroll .ic { width: 14px; height: 14px; }
.copy { display: flex; align-items: center; gap: 12px; padding: 6px 6px 0; }
.copy .field { flex: 1; }
.copy .btn { width: 73px; height: 30px; }
.char-status { padding: 20px 14px 14px; }
</style>
